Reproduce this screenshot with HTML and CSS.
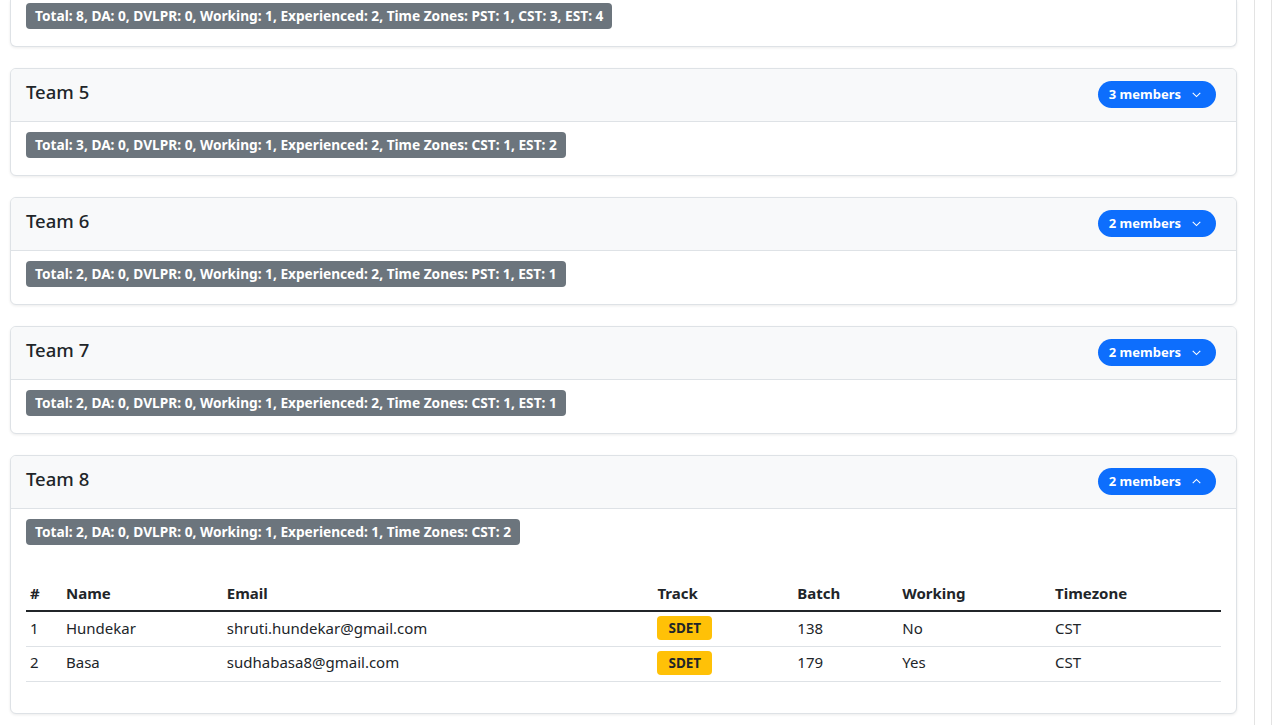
FILE: index.html
```html
<!DOCTYPE html>
<html lang="en">
<head>
<meta charset="utf-8">
<title>Teams</title>
<link rel="stylesheet" href="styles.css">
</head>
<body>
<div class="layout">
  <main class="main">
    <div class="teams">
      <section class="card card-partial">
        <div class="card-body">
          <span class="badge stats">Total: 8, DA: 0, DVLPR: 0, Working: 1, Experienced: 2, Time Zones: PST: 1, CST: 3, EST: 4</span>
        </div>
      </section>

      <section class="card">
        <div class="card-header">
          <h5 class="team-title">Team 5</h5>
          <button class="members-btn">3 members <svg class="chev" viewBox="0 0 16 16" width="11" height="11"><path d="M2.5 5.5 8 11l5.5-5.5" fill="none" stroke="currentColor" stroke-width="1.6"/></svg></button>
        </div>
        <div class="card-body">
          <span class="badge stats">Total: 3, DA: 0, DVLPR: 0, Working: 1, Experienced: 2, Time Zones: CST: 1, EST: 2</span>
        </div>
      </section>

      <section class="card">
        <div class="card-header">
          <h5 class="team-title">Team 6</h5>
          <button class="members-btn">2 members <svg class="chev" viewBox="0 0 16 16" width="11" height="11"><path d="M2.5 5.5 8 11l5.5-5.5" fill="none" stroke="currentColor" stroke-width="1.6"/></svg></button>
        </div>
        <div class="card-body">
          <span class="badge stats">Total: 2, DA: 0, DVLPR: 0, Working: 1, Experienced: 2, Time Zones: PST: 1, EST: 1</span>
        </div>
      </section>

      <section class="card">
        <div class="card-header">
          <h5 class="team-title">Team 7</h5>
          <button class="members-btn">2 members <svg class="chev" viewBox="0 0 16 16" width="11" height="11"><path d="M2.5 5.5 8 11l5.5-5.5" fill="none" stroke="currentColor" stroke-width="1.6"/></svg></button>
        </div>
        <div class="card-body">
          <span class="badge stats">Total: 2, DA: 0, DVLPR: 0, Working: 1, Experienced: 2, Time Zones: CST: 1, EST: 1</span>
        </div>
      </section>

      <section class="card">
        <div class="card-header">
          <h5 class="team-title">Team 8</h5>
          <button class="members-btn">2 members <svg class="chev" viewBox="0 0 16 16" width="11" height="11"><path d="M2.5 10.5 8 5l5.5 5.5" fill="none" stroke="currentColor" stroke-width="1.6"/></svg></button>
        </div>
        <div class="card-body expanded">
          <span class="badge stats">Total: 2, DA: 0, DVLPR: 0, Working: 1, Experienced: 1, Time Zones: CST: 2</span>
          <table class="members">
            <thead>
              <tr>
                <th class="c-num">#</th>
                <th class="c-name">Name</th>
                <th class="c-email">Email</th>
                <th class="c-track">Track</th>
                <th class="c-batch">Batch</th>
                <th class="c-work">Working</th>
                <th class="c-tz">Timezone</th>
              </tr>
            </thead>
            <tbody>
              <tr>
                <td>1</td>
                <td>Hundekar</td>
                <td>shruti.hundekar@gmail.com</td>
                <td><span class="badge track">SDET</span></td>
                <td>138</td>
                <td>No</td>
                <td>CST</td>
              </tr>
              <tr>
                <td>2</td>
                <td>Basa</td>
                <td>sudhabasa8@gmail.com</td>
                <td><span class="badge track">SDET</span></td>
                <td>179</td>
                <td>Yes</td>
                <td>CST</td>
              </tr>
            </tbody>
          </table>
        </div>
      </section>
    </div>
  </main>
  <aside class="side"></aside>
</div>
</body>
</html>
```

FILE: styles.css
```css
* { box-sizing: border-box; }

html, body {
  margin: 0;
  padding: 0;
  height: 100%;
  overflow: hidden;
  background: #fff;
}

body {
  font-family: "Segoe UI", "Noto Sans", "Liberation Sans", sans-serif;
  font-size: 15px;
  line-height: 1.5;
  color: #212529;
}

.layout {
  display: flex;
  height: 725px;
}

.main {
  width: 1254px;
  flex: none;
  padding: 0 17px 0 10px;
}

.side {
  width: 18px;
  flex: none;
  border-left: 1px solid #e3e3e3;
  border-right: 1px solid #e3e3e3;
}

.teams {
  display: flex;
  flex-direction: column;
  gap: 21px;
}

.card {
  border: 1px solid #dee2e6;
  border-radius: 6px;
  background: #fff;
  box-shadow: 0 1px 3px rgba(0, 0, 0, 0.08);
  overflow: hidden;
}

.card-partial {
  border-top: 0;
  border-top-left-radius: 0;
  border-top-right-radius: 0;
}

.card-partial .card-body {
  padding-top: 3px;
}

.card-header {
  display: flex;
  align-items: center;
  justify-content: space-between;
  padding: 0 20px 0 15px;
  height: 53px;
  background: #f8f9fa;
  border-bottom: 1px solid #dee2e6;
}

.team-title {
  margin: 0 0 5px;
  font-size: 18.5px;
  font-weight: 500;
  line-height: 1.2;
  color: #212529;
}

.members-btn {
  display: inline-flex;
  align-items: center;
  gap: 10px;
  height: 27px;
  margin-bottom: 2px;
  padding: 0 14px 0 11px;
  border: 0;
  border-radius: 14px;
  background: #0d6efd;
  color: #fff;
  font-family: inherit;
  font-size: 13px;
  font-weight: 700;
}

.chev { display: block; }

.card-body {
  padding: 10px 15px 17px;
}

.card-body.expanded {
  padding-bottom: 31px;
}

.badge {
  display: inline-block;
  vertical-align: top;
  border-radius: 4px;
  font-weight: 700;
  white-space: nowrap;
}

.stats {
  background: #6c757d;
  color: #fff;
  font-size: 13.7px;
  height: 26px;
  line-height: 26px;
  padding: 0 9px;
}

.track {
  background: #ffc107;
  color: #212529;
  font-size: 13.5px;
  height: 24px;
  line-height: 24px;
  padding: 0 11px;
  vertical-align: middle;
}

.members {
  width: 100%;
  border-collapse: collapse;
  margin-top: 32px;
}

.members th,
.members td {
  text-align: left;
  padding: 0 4px;
  height: 35px;
  vertical-align: middle;
  border-bottom: 1px solid #dee2e6;
}

.members td {
  padding-bottom: 2px;
}

.members th {
  font-weight: 700;
  border-bottom: 2px solid #212529;
  height: 34px;
}

.c-num { width: 36px; }
.c-name { width: 161px; }
.c-email { width: 431px; }
.c-track { width: 140px; }
.c-batch { width: 105px; }
.c-work { width: 153px; }
.c-tz { width: 170px; }
```
